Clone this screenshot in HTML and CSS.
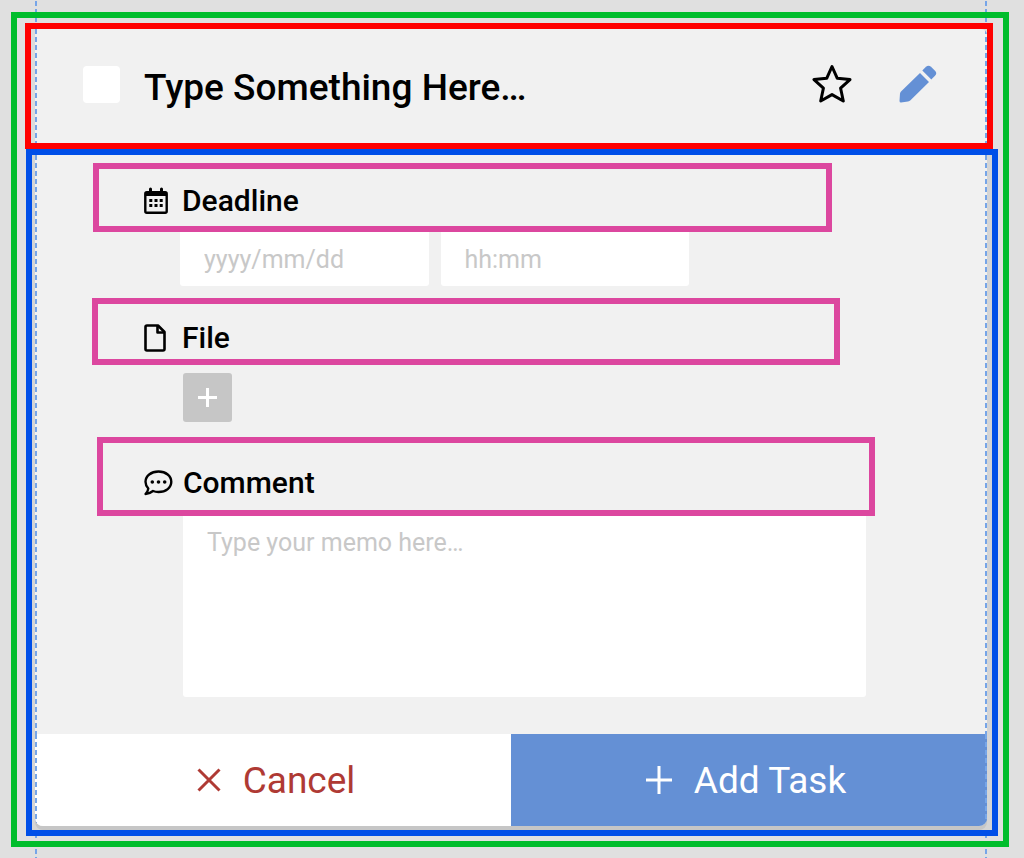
FILE: index.html
```
<!DOCTYPE html>
<html lang="en">
    <head>
        <meta charset="utf-8">
        <title>Add Task</title>
        <link rel="stylesheet" href="styles.css">
    </head>
    <body class="guides">
        <form class="task">
            <div class="task-header">
                <div class="header-inner guides">
                    <input type="checkbox" class="done" aria-label="Completed">
                    <input type="text" class="title" aria-label="Task title" placeholder="Type Something Here…">
                    <button type="button" class="icon-btn" aria-label="Star">
                        <svg width="40" height="40" viewBox="0 0 40 40" fill="none" stroke="#000" stroke-width="3" stroke-linejoin="round">
                            <path d="M20 2.5 L25.3 14.3 L38 15.6 L28.6 24.2 L31.3 37 L20 30.6 L8.7 37 L11.4 24.2 L2 15.6 L14.7 14.3 Z"/>
                        </svg>
                    </button>
                    <button type="button" class="icon-btn" aria-label="Edit">
                        <svg width="40" height="40" viewBox="0 0 40 40" fill="#6490d5">
                            <path d="M22 9 L31 18 L12.5 36.3 Q11.5 37.3 10 37.5 L3 38.5 Q1.5 38.5 1.5 37 L2 29.5 Q2.2 28.3 3 27.5 Z"/>
                            <path d="M24.3 6.5 L28 2.8 Q30.5 0.5 33 2.8 L37 6.8 Q39.5 9.3 37 11.8 L33.3 15.5 Z"/>
                        </svg>
                    </button>
                </div>
            </div>

            <div class="task-body">
                <div class="body-inner guides">
                    <div class="label-row deadline">
                        <svg width="26" height="28" viewBox="0 0 26 28">
                            <path d="M6.5 2 V6 M17.5 2 V6" stroke="#000" stroke-width="3" stroke-linecap="round"/>
                            <rect x="1.3" y="5.3" width="21.4" height="20.4" rx="1.5" fill="none" stroke="#000" stroke-width="2.4"/>
                            <path d="M1 5 H23 V9 H1 Z"/>
                            <path d="M5.3 12 h3 v3 h-3 Z M10.5 12 h3 v3 h-3 Z M15.7 12 h3 v3 h-3 Z M5.3 17 h3 v3 h-3 Z M10.5 17 h3 v3 h-3 Z M15.7 17 h3 v3 h-3 Z"/>
                        </svg>
                        <label for="date">Deadline</label>
                    </div>
                    <div class="date-row">
                        <input type="text" id="date" placeholder="yyyy/mm/dd">
                        <input type="text" id="time" aria-label="Time" placeholder="hh:mm">
                    </div>

                    <div class="label-row file">
                        <svg width="26" height="28" viewBox="0 0 26 28" fill="none" stroke="#000" stroke-width="2.6" stroke-linejoin="round">
                            <path d="M3 1.5 H14 L20.5 8 V25 Q20.5 26.5 19 26.5 H3 Q1.5 26.5 1.5 25 V3 Q1.5 1.5 3 1.5 Z"/>
                            <path d="M13.5 1.5 V8.5 H20.5"/>
                        </svg>
                        <label for="add-file">File</label>
                    </div>
                    <button type="button" id="add-file" class="add-file">
                        <svg width="19" height="19" viewBox="0 0 19 19" stroke="#fff" stroke-width="3">
                            <path d="M9.5 0 V19 M0 9.5 H19"/>
                        </svg>
                    </button>

                    <div class="label-row comment">
                        <svg width="29" height="26" viewBox="0 0 29 26">
                            <path d="M14.5 1.5 C22 1.5 27.3 6 27.3 11.8 C27.3 17.6 22 22 14.5 22 Q11.5 22 9 21 Q5.5 23.8 1.5 24 Q4 21.5 4.3 18.5 Q1.5 15.5 1.5 11.8 C1.5 6 7 1.5 14.5 1.5 Z" fill="none" stroke="#000" stroke-width="2.4" stroke-linejoin="round"/>
                            <circle cx="8.3" cy="12" r="1.8"/>
                            <circle cx="14.5" cy="12" r="1.8"/>
                            <circle cx="20.7" cy="12" r="1.8"/>
                        </svg>
                        <label for="memo">Comment</label>
                    </div>
                    <textarea id="memo" placeholder="Type your memo here…"></textarea>

                    <div class="actions">
                        <button type="reset" class="cancel guides">
                            <svg width="24" height="24" viewBox="0 0 24 24" stroke="#af3a34" stroke-width="3">
                                <path d="M1.5 1.5 L22.5 22.5 M22.5 1.5 L1.5 22.5"/>
                            </svg>
                            Cancel
                        </button>
                        <button type="button" class="add guides">
                            <svg width="26" height="28" viewBox="0 0 26 28" stroke="#fff" stroke-width="3">
                                <path d="M13 0 V28 M0 14 H26"/>
                            </svg>
                            Add Task
                        </button>
                    </div>
                </div>
            </div>
        </form>
    </body>
</html>
```
FILE: styles.css
```
*
{
    box-sizing: border-box;
}

body
{
    margin: 0;
    padding: 12px 15px 11px 11px;
    background-color: #e0e0e0;
    background-position: left 35px top 1px, right 37px top 1px;
    font-family: Roboto, sans-serif;
    color: #000;
}

/* dashed layout guides on both sides */
.guides
{
    background-image: linear-gradient(#76a5e8 5px, transparent 5px), linear-gradient(#76a5e8 5px, transparent 5px);
    background-size: 2px 8px;
    background-repeat: repeat-y;
}

input, textarea, button
{
    font-family: inherit;
    border: 0;
    margin: 0;
    padding: 0;
}

button
{
    cursor: pointer;
}

.task
{
    border: 6px solid #00bd2c;
    padding: 5px 5px 5px 8px;
}

.task-header
{
    border: 6px solid #ff0000;
    margin-right: 5px;
    padding-left: 4px;
    background-color: #dcdcdc;
}

.header-inner
{
    display: flex;
    align-items: center;
    height: 114px;
    padding: 0 49px 4px 48px;
    background-color: #f1f1f1;
    background-position: left top, right top;
    border-radius: 0 6px 0 0;
}

.done
{
    appearance: none;
    width: 37px;
    height: 37px;
    margin-right: 24px;
    background-color: #fff;
    border-radius: 4px;
}

.title
{
    flex: 1;
    min-width: 0;
    height: 56px;
    padding-top: 6px;
    background: none;
    font-size: 37px;
    font-weight: 500;
}

.title::placeholder
{
    color: #000;
    opacity: 1;
}

.icon-btn
{
    width: 40px;
    height: 40px;
    margin-left: 46px;
    background: none;
}

.icon-btn svg
{
    display: block;
}

.task-body
{
    border: 6px solid #004fe8;
    margin-left: 1px;
    padding: 0 5px 4px 3px;
    background-color: #d5d5d5;
}

.body-inner
{
    padding-top: 8px;
    background-color: #f1f1f1;
    background-position: left top, right top;
    border-radius: 0 0 8px 8px;
    box-shadow: 0 4px 0 #c6c6c6;
}

.label-row
{
    display: flex;
    align-items: center;
    border: 6px solid #dc479f;
    font-size: 30px;
    font-weight: 500;
}

.label-row svg
{
    flex: none;
}

.label-row label
{
    line-height: 36px;
}

.deadline
{
    height: 69px;
    margin: 0 155px 0 58px;
    padding: 6px 0 0 45px;
}

.file
{
    height: 67px;
    margin: 12px 147px 0 57px;
    padding: 12px 0 0 46px;
}

.comment
{
    height: 79px;
    margin: 15px 112px 0 62px;
    padding: 12px 0 0 41px;
}

.deadline svg, .file svg
{
    margin-right: 12px;
}

.comment svg
{
    margin-right: 10px;
}

.date-row
{
    display: flex;
    gap: 12px;
    margin: 0 298px 0 145px;
}

.date-row input
{
    flex: 1;
    min-width: 0;
    height: 54px;
    padding: 0 24px;
    background-color: #fff;
    border-radius: 0 0 3px 3px;
    font-size: 25px;
}

.date-row input::placeholder, textarea::placeholder
{
    color: #c8c8c8;
    opacity: 1;
}

.add-file
{
    display: flex;
    align-items: center;
    justify-content: center;
    width: 49px;
    height: 49px;
    margin: 8px 0 0 148px;
    background-color: #c6c6c6;
    border-radius: 3px;
}

textarea
{
    display: block;
    width: calc(100% - 269px);
    height: 181px;
    margin: 0 0 37px 148px;
    padding: 12px 24px;
    background-color: #fff;
    border-radius: 0 0 3px 3px;
    font-size: 25px;
    line-height: 30px;
    resize: none;
}

.actions
{
    display: grid;
    grid-template-columns: 1fr 1fr;
}

.actions button
{
    display: flex;
    align-items: center;
    justify-content: center;
    gap: 22px;
    height: 92px;
    font-size: 37px;
}

.actions .cancel
{
    padding-left: 6px;
    background-color: #fff;
    background-position: left top, left top;
    color: #af3a34;
    border-radius: 0 0 0 8px;
}

.actions .add
{
    padding-right: 6px;
    background-color: #6490d5;
    background-position: right top, right top;
    color: #fff;
    border-radius: 0 0 8px 0;
}
```
